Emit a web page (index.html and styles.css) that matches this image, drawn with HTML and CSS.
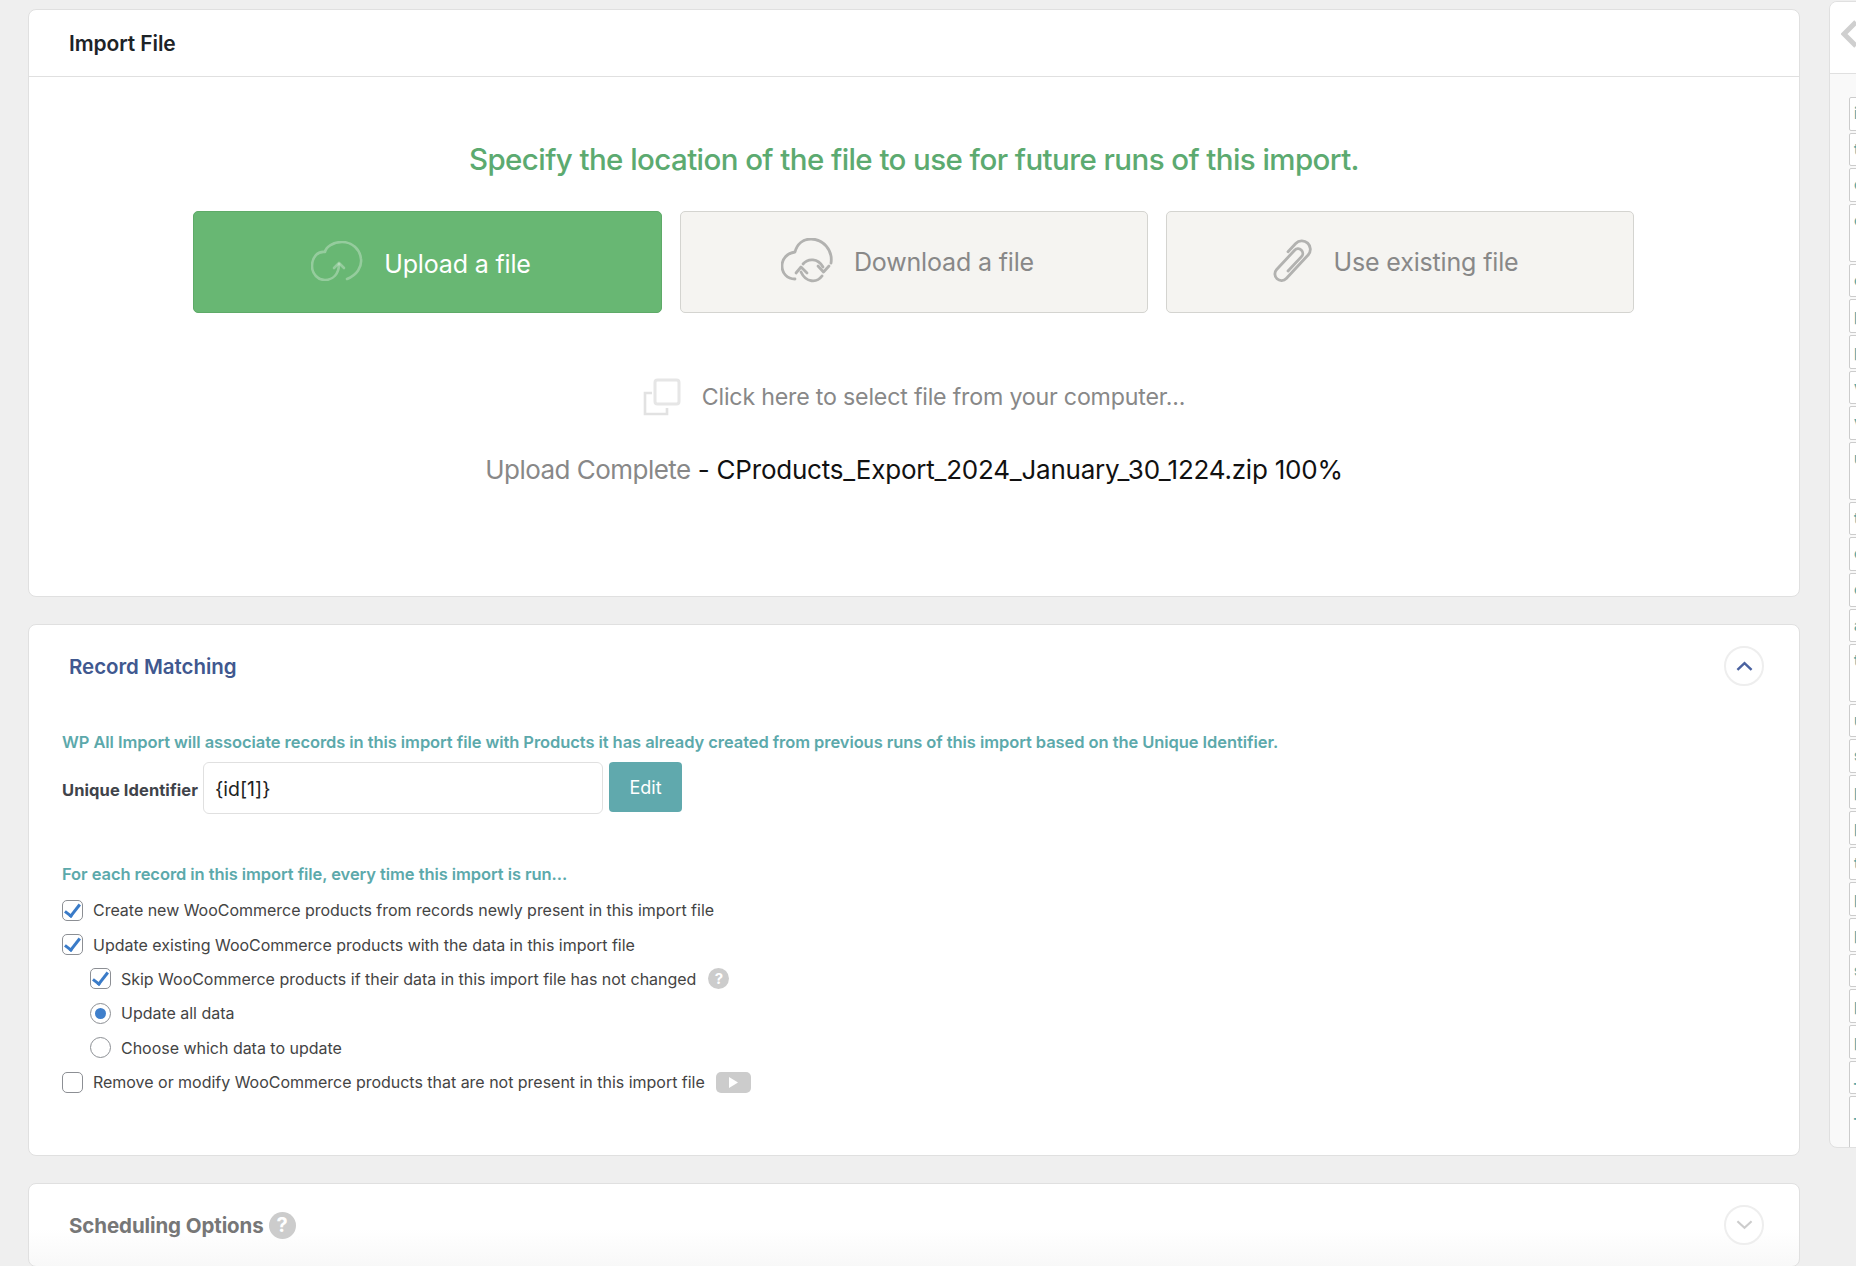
FILE: index.html
```html
<!DOCTYPE html>
<html lang="en">
<head>
<meta charset="utf-8">
<title>Import File</title>
<link rel="stylesheet" href="styles.css">
</head>
<body>
<div class="page">
  <main class="main">
    <section class="card card-file">
      <header class="file-head"><h2 class="file-title">Import File</h2></header>
      <div class="file-body">
        <h3 class="file-lead">Specify the location of the file to use for future runs of this import.</h3>
        <div class="sources">
          <a class="source source-active">
            <svg class="source-icon" viewBox="0 0 52 40" width="52" height="40" fill="none" stroke-width="2.6" stroke-linecap="round" stroke-linejoin="round"><path d="M36 38C46 34 51 26 50 18 49 8 41 1 31 1 22 1 15 6 14 11 6 10 1 17 1 25 1 33 7 39 14 39 22 39 28 33 28 23"/><path d="M23 27L28 22 33 27"/></svg>
            <span>Upload a file</span>
          </a>
          <a class="source">
            <svg class="source-icon" viewBox="0 0 52 45" width="52" height="45" fill="none" stroke-width="2.8" stroke-linecap="round" stroke-linejoin="round"><path d="M50 25C52 12 42 1 30 1 22 1 16 6 14 14 6 15 1 21 1 28 1 35 6 41 14 41"/><path d="M22 26C27 20 37 20 42 29"/><path d="M37 28L42.5 34 48 28"/><path d="M41 38C36 45 25 45 20 34"/><path d="M15 35L20 29 26 35"/></svg>
            <span>Download a file</span>
          </a>
          <a class="source">
            <svg class="source-icon" viewBox="0 0 44 46" width="44" height="46" fill="none" stroke-linecap="round" stroke-linejoin="round"><path transform="translate(22 23) rotate(43) scale(.94)" stroke-width="3" d="M5 10V-11A5 5 0 0 0 -5 -11V17A7 7 0 0 0 9 17V-17A9 9 0 0 0 -9 -17V-5"/></svg>
            <span>Use existing file</span>
          </a>
        </div>
        <div class="pick">
          <svg class="pick-icon" viewBox="0 0 38 38" width="38" height="38" fill="none" stroke="#e6e6e6" stroke-width="3"><rect x="12" y="2" width="24" height="24" rx="2.500"/><path d="M9 15H2V36H24V30" stroke="#e2e2e2" stroke-width="2.600"/></svg>
          <span>Click here to select file from your computer...</span>
        </div>
        <p class="progress"><span class="progress-label">Upload Complete</span> - CProducts_Export_2024_January_30_1224.zip 100%</p>
      </div>
    </section>

    <section class="card card-match">
      <header class="fold-head">
        <h2 class="fold-title fold-title-blue">Record Matching</h2>
        <span class="fold-toggle fold-toggle-up"><svg viewBox="0 0 18 10" width="17" height="10" fill="none" stroke="#4a62a0" stroke-width="2.600"><path d="M1.500 9L9 2 16.500 9"/></svg></span>
      </header>
      <div class="match-body">
        <p class="note">WP All Import will associate records in this import file with Products it has already created from previous runs of this import based on the Unique Identifier.</p>
        <div class="identifier">
          <label class="identifier-label" for="uid">Unique Identifier</label>
          <input class="identifier-input" id="uid" type="text" value="{id[1]}">
          <button class="identifier-edit" type="button">Edit</button>
        </div>
        <p class="note note-each">For each record in this import file, every time this import is run...</p>
        <label class="opt"><input type="checkbox" checked><span>Create new WooCommerce products from records newly present in this import file</span></label>
        <label class="opt"><input type="checkbox" checked><span>Update existing WooCommerce products with the data in this import file</span></label>
        <label class="opt opt-sub"><input type="checkbox" checked><span>Skip WooCommerce products if their data in this import file has not changed</span><i class="help">?</i></label>
        <label class="opt opt-sub"><input type="radio" name="upd" checked><span>Update all data</span></label>
        <label class="opt opt-sub"><input type="radio" name="upd"><span>Choose which data to update</span></label>
        <label class="opt"><input type="checkbox"><span>Remove or modify WooCommerce products that are not present in this import file</span><i class="play"><svg viewBox="0 0 10 12" width="9" height="11"><path d="M0 0L10 6 0 12Z" fill="#fff"/></svg></i></label>
      </div>
    </section>

    <section class="card card-sched">
      <header class="fold-head">
        <h2 class="fold-title fold-title-grey">Scheduling Options<i class="help help-large">?</i></h2>
        <span class="fold-toggle"><svg viewBox="0 0 18 10" width="17" height="10" fill="none" stroke="#ccc" stroke-width="2.200"><path d="M1.500 1L9 8 16.500 1"/></svg></span>
      </header>
    </section>
  </main>

  <aside class="side">
    <div class="side-head"><svg viewBox="0 0 20 28" width="20" height="28" fill="none" stroke="#cfcfcf" stroke-width="5"><path d="M15 2L3 14 15 26"/></svg></div>
    <div class="side-body">
      <div class="cell">i</div>
      <div class="cell">t</div>
      <div class="cell">c</div>
      <div class="cell cell-tall">c</div>
      <div class="cell">c</div>
      <div class="cell">p</div>
      <div class="cell">p</div>
      <div class="cell">v</div>
      <div class="cell">v</div>
      <div class="cell cell-tall">u</div>
      <div class="cell">t</div>
      <div class="cell">c</div>
      <div class="cell">c</div>
      <div class="cell">a</div>
      <div class="cell cell-tall">t</div>
      <div class="cell">u</div>
      <div class="cell">s</div>
      <div class="cell">p</div>
      <div class="cell">p</div>
      <div class="cell">t</div>
      <div class="cell">p</div>
      <div class="cell">p</div>
      <div class="cell">s</div>
      <div class="cell">p</div>
      <div class="cell">p</div>
      <div class="cell">_</div>
      <div class="cell cell-end">_</div>
    </div>
  </aside>
</div>
</body>
</html>
```

FILE: styles.css
```css
* { box-sizing: border-box; }
html, body { margin: 0; padding: 0; height: 100%; overflow: hidden; }
body { background: #efefef; font-family: Inter, "Liberation Sans", sans-serif; color: #444; }

.page { display: flex; align-items: flex-start; gap: 29px; width: 1900px; padding: 1px 0 0 28px; }
.main { flex: 0 0 1772px; padding-top: 8px; }

.card { background: #fff; border: 1px solid #e0e0e0; border-radius: 8px; margin-bottom: 27px; }
.card-file { height: 588px; }
.card-match { height: 532px; }
.card-sched { height: 84px; background: linear-gradient(#fff 55%, #f8f8f8 100%); }

.file-head { height: 67px; border-bottom: 1px solid #e0e0e0; padding: 1px 0 0 40px; display: flex; align-items: center; }
.file-title { margin: 0; font-size: 21px; font-weight: 600; color: #1d2327; letter-spacing: -0.1px; }
.file-body { padding-top: 62px; text-align: center; }
.file-lead { margin: 0; font-size: 29.5px; line-height: 40px; font-weight: 500; color: #5caa70; letter-spacing: -0.58px; }

.sources { display: flex; justify-content: center; gap: 18px; margin-top: 32px; padding-right: 2px; }
.source { flex: 0 0 468px; height: 102px; display: flex; align-items: center; justify-content: center; gap: 21px; padding-right: 12px; border: 1px solid #d4d4d0; border-radius: 5px; background: #f5f4f1; color: #888; font-size: 25px; letter-spacing: -0.16px; stroke: #b2b2b0; }
.source-active { flex-basis: 469px; background: #68b773; border-color: #5eaa68; color: #fff; stroke: rgba(255, 255, 255, 0.3); }
.source-active span { padding-top: 3px; }
.source-icon { stroke: inherit; flex: none; margin-bottom: 3px; }

.pick { display: flex; justify-content: center; align-items: center; gap: 21px; margin-top: 64px; height: 40px; font-size: 23.2px; color: #888; letter-spacing: -0.2px; }
.pick-icon { flex: none; }
.progress { margin: 33px 0 0; font-size: 26px; line-height: 40px; color: #111; letter-spacing: -0.22px; }
.progress-label { color: #888; letter-spacing: -0.53px; }

.fold-head { height: 84px; padding: 0 35px 0 40px; display: flex; align-items: center; justify-content: space-between; }
.fold-title { margin: 0 0 2px; font-size: 20.500px; font-weight: 600; letter-spacing: -0.05px; display: flex; align-items: center; gap: 5px; }
.fold-title-blue { color: #40588f; }
.fold-title-grey { color: #777; font-weight: 700; letter-spacing: -0.1px; }
.fold-toggle { width: 40px; height: 40px; border: 2px solid #eee; border-radius: 50%; display: flex; align-items: center; justify-content: center; background: #fff; margin-bottom: 3px; }

.match-body { padding: 21px 0 0 33px; }
.note { margin: 0; font-size: 16.500px; line-height: 24px; font-weight: 600; color: #5ca9ab; letter-spacing: -0.07px; }
.note-each { margin-top: 44px; }

.identifier { display: flex; align-items: flex-start; margin-top: 8px; }
.identifier-label { width: 141px; line-height: 56px; font-size: 16.500px; font-weight: 700; color: #40434a; letter-spacing: 0.08px; white-space: nowrap; }
.identifier-input { width: 400px; height: 52px; padding: 2px 11px 0; border: 1px solid #e0e0e0; border-radius: 6px; font: 400 19.5px Inter, "Liberation Sans", sans-serif; color: #222; outline: none; background: #fff; }
.identifier-edit { width: 73px; height: 50px; margin-left: 6px; border: 0; border-radius: 4px; background: #60a9ad; color: #fff; font: 400 18px Inter, "Liberation Sans", sans-serif; }

.opt { display: flex; align-items: center; height: 34.400px; font-size: 16px; color: #444; }
.note-each + .opt { margin-top: 7px; }
.opt-sub { padding-left: 28px; }
.opt span { letter-spacing: -0.02px; }
.opt input { appearance: none; -webkit-appearance: none; flex: none; width: 21px; height: 21px; margin: 0 10px 0 0; border: 1px solid #8c8f94; border-radius: 5px; background: #fff; display: flex; align-items: center; justify-content: center; }
.opt input[type="radio"] { border-radius: 50%; }
.opt input[type="checkbox"]:checked::before { content: ""; width: 6px; height: 13px; margin-top: -3px; border: solid #3a7bc8; border-width: 0 3px 3px 0; transform: rotate(38deg); }
.opt input[type="radio"]:checked::before { content: ""; width: 11px; height: 11px; border-radius: 50%; background: #3f7fcb; }

.help { flex: none; width: 21px; height: 21px; margin-left: 12px; border-radius: 50%; background: #ccc; color: #fff; font: normal 700 15px/21px Inter, "Liberation Sans", sans-serif; text-align: center; }
.help-large { width: 27px; height: 27px; margin-left: 0; font-size: 20px; line-height: 27px; }
.play { flex: none; width: 35px; height: 21px; margin-left: 11px; border-radius: 5px; background: #ccc; display: flex; align-items: center; justify-content: center; }

.side { flex: 0 0 60px; height: 1147px; background: #f9f9f9; border: 1px solid #e0e0e0; border-radius: 8px; overflow: hidden; }
.side-head { height: 72px; background: #fff; border-bottom: 1px solid #e0e0e0; padding: 18px 0 0 11px; }
.side-head svg { display: block; }
.side-body { padding: 23px 0 0 19px; }
.cell { height: 33.700px; margin-bottom: 2px; padding-left: 4px; border: 1px solid #ccc; background: #fff; border-radius: 2px; font-size: 16px; line-height: 31px; font-weight: 700; color: #5ca9ab; }
.cell-tall { height: 57.500px; }
.cell-end { height: 60px; margin-bottom: 0; }
```
